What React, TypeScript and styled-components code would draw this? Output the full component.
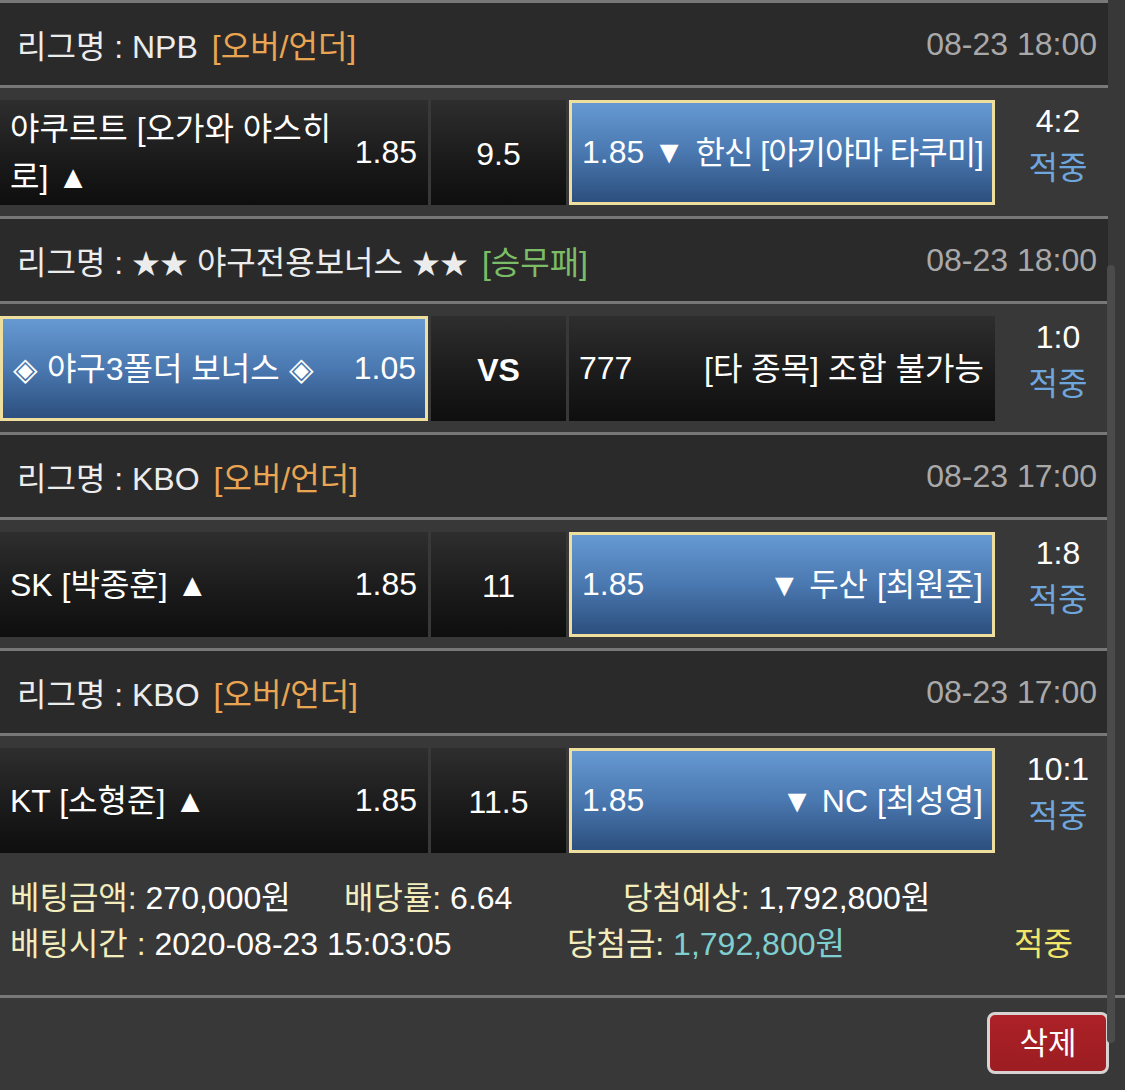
import React from "react";
import styled, { createGlobalStyle } from "styled-components";

const Global = createGlobalStyle`
  html, body {
    margin: 0;
    padding: 0;
    background: #383838;
  }
  body {
    font-family: "Liberation Sans", "Noto Sans CJK KR", sans-serif;
    font-size: 32px;
    color: #ffffff;
  }
`;

const Page = styled.div`
  position: relative;
  width: 1125px;
  height: 1090px;
  overflow: hidden;
  background: #383838;
`;

const List = styled.div`
  width: 1108px;
  display: flex;
  flex-direction: column;
`;

const Header = styled.div`
  height: 82px;
  border-top: 3px solid #787878;
  border-bottom: 3px solid #787878;
  background: #2a2a2a;
  display: flex;
  align-items: center;
  justify-content: space-between;
  padding: 0 11px 0 17px;
`;

const Title = styled.div`
  color: #ececec;
  white-space: nowrap;
`;

const Stars = styled.span`
  font-size: 28px;
`;

const Tag = styled.span<{ $tone: "orange" | "green" }>`
  margin-left: 14px;
  color: ${(p) => (p.$tone === "orange" ? "#e9a552" : "#7bbd66")};
`;

const DateText = styled.div`
  color: #a9a9a9;
`;

const Row = styled.div`
  display: grid;
  grid-template-columns: 428px 135px 426px 1fr;
  column-gap: 3px;
  padding: 12px 0 11px;
`;

const Cell = styled.div<{ $selected?: boolean }>`
  box-sizing: border-box;
  height: 105px;
  display: flex;
  align-items: center;
  justify-content: space-between;
  gap: 6px;
  padding: 0 ${(p) => (p.$selected ? "9px" : "11px")} 0 10px;
  border: ${(p) => (p.$selected ? "3px solid #eedf9f" : "none")};
  background: ${(p) =>
    p.$selected
      ? "linear-gradient(to bottom, #6699d2 0%, #4a78b0 50%, #2c4f7e 100%)"
      : "linear-gradient(to bottom, #2e2e2e 0%, #1b1b1b 55%, #0e0e0e 100%)"};
  color: #ffffff;
`;

const Name = styled.span<{ $wrap?: boolean; $tight?: boolean }>`
  line-height: 48px;
  ${(p) => (p.$wrap ? "width: 330px;" : "white-space: nowrap;")}
  ${(p) => (p.$tight ? "letter-spacing: -1px;" : "")}
`;

const Odds = styled.span`
  white-space: nowrap;
`;

const Middle = styled.div<{ $bold?: boolean }>`
  height: 105px;
  display: flex;
  align-items: center;
  justify-content: center;
  padding-top: 4px;
  box-sizing: border-box;
  background: linear-gradient(to bottom, #2e2e2e 0%, #1b1b1b 55%, #0e0e0e 100%);
  font-weight: ${(p) => (p.$bold ? 700 : 400)};
`;

const Score = styled.div`
  display: flex;
  flex-direction: column;
  align-items: center;
  justify-content: flex-start;
  padding-left: 10px;
  line-height: 47px;
  margin-top: -2px;
`;

const ScoreValue = styled.span`
  color: #ffffff;
`;

const Result = styled.span`
  color: #6ea7de;
`;

const Summary = styled.div`
  padding: 11px 0 28px 10px;
  display: flex;
  flex-direction: column;
  line-height: 46px;
`;

const SummaryLine = styled.div`
  display: flex;
  white-space: nowrap;
`;

const SummaryItem = styled.span<{ $w?: number }>`
  ${(p) => (p.$w ? `width: ${p.$w}px;` : "")}
  flex: none;
`;

const Label = styled.span`
  color: #f3edbd;
`;

const Value = styled.span<{ $tone?: "white" | "teal" }>`
  color: ${(p) => (p.$tone === "teal" ? "#7fcfd0" : "#ffffff")};
`;

const Hit = styled.span`
  color: #f3e56a;
`;

const Divider = styled.div`
  height: 3px;
  background: #787878;
`;

const ButtonBar = styled.div`
  display: flex;
  justify-content: flex-end;
  padding: 14px 16px 0 0;
`;

const DeleteButton = styled.button`
  width: 122px;
  height: 62px;
  box-sizing: border-box;
  border: 3px solid #d9d2d2;
  border-radius: 8px;
  background: linear-gradient(to bottom, #ac2127, #9c1d22);
  color: #ffffff;
  font-family: "Liberation Sans", "Noto Sans CJK KR", sans-serif;
  font-size: 31px;
  padding: 0;
  line-height: 1;
`;

const Thumb = styled.div`
  position: absolute;
  left: 1107px;
  top: 265px;
  width: 8px;
  height: 778px;
  border-radius: 4px;
  background: #4b4b4b;
`;

type Side = { name: string; odds: string; selected?: boolean; wrap?: boolean; tight?: boolean };
type Game = {
  league: React.ReactNode;
  tag: string;
  tone: "orange" | "green";
  date: string;
  home: Side;
  middle: string;
  bold?: boolean;
  away: Side;
  score: string;
};

const games: Game[] = [
  {
    league: "NPB",
    tag: "[오버/언더]",
    tone: "orange",
    date: "08-23 18:00",
    home: { name: "야쿠르트 [오가와 야스히로] ▲", odds: "1.85", wrap: true },
    middle: "9.5",
    away: { name: "한신 [아키야마 타쿠미]", odds: "1.85 ▼", selected: true, tight: true },
    score: "4:2",
  },
  {
    league: (
      <>
        <Stars>★★</Stars> 야구전용보너스 <Stars>★★</Stars>
      </>
    ),
    tag: "[승무패]",
    tone: "green",
    date: "08-23 18:00",
    home: { name: "◈ 야구3폴더 보너스 ◈", odds: "1.05", selected: true },
    middle: "VS",
    bold: true,
    away: { name: "[타 종목] 조합 불가능", odds: "777" },
    score: "1:0",
  },
  {
    league: "KBO",
    tag: "[오버/언더]",
    tone: "orange",
    date: "08-23 17:00",
    home: { name: "SK [박종훈] ▲", odds: "1.85" },
    middle: "11",
    away: { name: "▼ 두산 [최원준]", odds: "1.85", selected: true },
    score: "1:8",
  },
  {
    league: "KBO",
    tag: "[오버/언더]",
    tone: "orange",
    date: "08-23 17:00",
    home: { name: "KT [소형준] ▲", odds: "1.85" },
    middle: "11.5",
    away: { name: "▼ NC [최성영]", odds: "1.85", selected: true },
    score: "10:1",
  },
];

export default function App() {
  return (
    <Page>
      <Global />
      <List>
        {games.map((g, i) => (
          <React.Fragment key={i}>
            <Header>
              <Title>
                리그명 : {g.league}
                <Tag $tone={g.tone}>{g.tag}</Tag>
              </Title>
              <DateText>{g.date}</DateText>
            </Header>
            <Row>
              <Cell $selected={g.home.selected}>
                <Name $wrap={g.home.wrap} $tight={g.home.tight}>
                  {g.home.name}
                </Name>
                <Odds>{g.home.odds}</Odds>
              </Cell>
              <Middle $bold={g.bold}>{g.middle}</Middle>
              <Cell $selected={g.away.selected}>
                <Odds>{g.away.odds}</Odds>
                <Name $wrap={g.away.wrap} $tight={g.away.tight}>
                  {g.away.name}
                </Name>
              </Cell>
              <Score>
                <ScoreValue>{g.score}</ScoreValue>
                <Result>적중</Result>
              </Score>
            </Row>
          </React.Fragment>
        ))}
        <Summary>
          <SummaryLine>
            <SummaryItem $w={334}>
              <Label>베팅금액:</Label> <Value>270,000원</Value>
            </SummaryItem>
            <SummaryItem $w={279}>
              <Label>배당률:</Label> <Value>6.64</Value>
            </SummaryItem>
            <SummaryItem>
              <Label>당첨예상:</Label> <Value>1,792,800원</Value>
            </SummaryItem>
          </SummaryLine>
          <SummaryLine>
            <SummaryItem $w={557}>
              <Label>배팅시간 :</Label> <Value>2020-08-23 15:03:05</Value>
            </SummaryItem>
            <SummaryItem $w={447}>
              <Label>당첨금:</Label> <Value $tone="teal">1,792,800원</Value>
            </SummaryItem>
            <SummaryItem>
              <Hit>적중</Hit>
            </SummaryItem>
          </SummaryLine>
        </Summary>
      </List>
      <Divider />
      <ButtonBar>
        <DeleteButton>삭제</DeleteButton>
      </ButtonBar>
      <Thumb />
    </Page>
  );
}
